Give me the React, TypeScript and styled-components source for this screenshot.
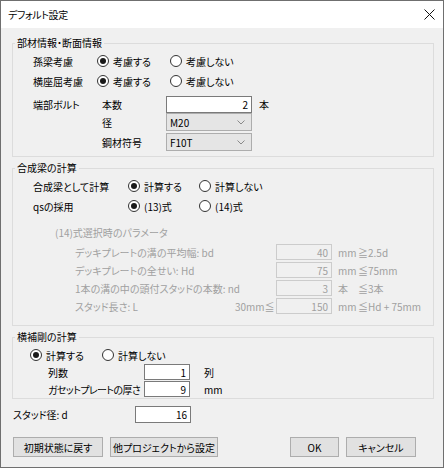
import styled, { createGlobalStyle } from 'styled-components'

const GlobalStyle = createGlobalStyle`
  html, body {
    margin: 0;
    padding: 0;
    background: #ffffff;
  }
  body {
    font-family: 'Noto Sans CJK JP', 'Liberation Sans', sans-serif;
    font-size: 10px;
    color: #000000;
  }
  * {
    box-sizing: border-box;
  }
`

const Window = styled.div`
  width: 444px;
  height: 468px;
  border: 1px solid #6f6f6f;
  display: flex;
  flex-direction: column;
  background: #f0f0f0;
  font-feature-settings: 'palt';
`

const TitleBar = styled.div`
  height: 27px;
  flex: none;
  background: #ffffff;
  display: flex;
  align-items: center;
  justify-content: space-between;
  padding: 0 8px 0 7px;
  font-size: 10px;
  letter-spacing: -0.4px;
`

const Body = styled.div`
  flex: 1;
  padding: 7px 9px 0 11px;
  display: flex;
  flex-direction: column;
`

const Group = styled.fieldset<{ $mt?: number; $pb?: number }>`
  margin: ${({ $mt }) => $mt ?? 0}px 0 0 0;
  min-width: 0;
  border: 1px solid #dcdcdc;
  padding: 0 0 ${({ $pb }) => $pb ?? 0}px 2px;
`

const Legend = styled.legend`
  padding: 0 2px;
  margin-left: 0;
  height: 16px;
  line-height: 16px;
`

const Inner = styled.div<{ $pl?: number }>`
  padding-left: ${({ $pl }) => $pl ?? 18}px;
`

const Row = styled.div<{ $h: number; $mt?: number; $pl?: number }>`
  display: flex;
  align-items: center;
  height: ${({ $h }) => $h}px;
  margin-top: ${({ $mt }) => $mt ?? 0}px;
  padding-left: ${({ $pl }) => $pl ?? 0}px;
  white-space: nowrap;
`

const Cell = styled.div<{ $w: number; $pl?: number; $dim?: boolean; $tight?: boolean }>`
  flex: none;
  width: ${({ $w }) => $w}px;
  padding-left: ${({ $pl }) => $pl ?? 0}px;
  letter-spacing: ${({ $tight }) => ($tight ? '-0.6px' : 'normal')};
  color: ${({ $dim }) => ($dim ? '#a0a0a0' : '#000000')};
`

const Note = styled.span<{ $ml?: number; $w?: number; $dim?: boolean; $right?: boolean }>`
  margin-left: ${({ $ml }) => $ml ?? 0}px;
  width: ${({ $w }) => ($w ? `${$w}px` : 'auto')};
  flex: none;
  text-align: ${({ $right }) => ($right ? 'right' : 'left')};
  padding-right: ${({ $right }) => ($right ? 7 : 0)}px;
  color: ${({ $dim }) => ($dim ? '#a0a0a0' : '#000000')};
`

const RadioLabel = styled.label<{ $w?: number }>`
  display: flex;
  align-items: center;
  gap: 4px;
  flex: none;
  width: ${({ $w }) => ($w ? `${$w}px` : 'auto')};
`

const RadioDot = styled.span<{ $on: boolean }>`
  width: 12px;
  height: 12px;
  border-radius: 50%;
  border: 1px solid #333333;
  background: #ffffff;
  display: flex;
  align-items: center;
  justify-content: center;

  &::after {
    content: '';
    display: ${({ $on }) => ($on ? 'block' : 'none')};
    width: 6px;
    height: 6px;
    border-radius: 50%;
    background: #1a1a1a;
  }
`

const Field = styled.div<{ $w: number; $h?: number; $off?: boolean }>`
  flex: none;
  width: ${({ $w }) => $w}px;
  height: ${({ $h }) => $h ?? 17}px;
  border: 1px solid ${({ $off }) => ($off ? '#cccccc' : '#7a7a7a')};
  background: ${({ $off }) => ($off ? '#f0f0f0' : '#ffffff')};
  color: ${({ $off }) => ($off ? '#a0a0a0' : '#000000')};
  display: flex;
  align-items: center;
  justify-content: flex-end;
  padding-right: 3px;
`

const Combo = styled.div`
  flex: none;
  width: 86px;
  height: 18px;
  border: 1px solid #adadad;
  background: #e5e5e5;
  display: flex;
  align-items: center;
  justify-content: space-between;
  padding: 0 6px 0 3px;
`

const ButtonRow = styled.div`
  display: flex;
  align-items: center;
  margin-top: 14px;
  padding-left: 1px;
`

const Button = styled.button<{ $w: number; $ml?: number }>`
  width: ${({ $w }) => $w}px;
  height: 20px;
  margin-left: ${({ $ml }) => $ml ?? 0}px;
  border: 1px solid #adadad;
  background: #e1e1e1;
  font-family: inherit;
  font-size: 10px;
  font-feature-settings: 'palt';
  color: #000000;
  padding: 0;
  white-space: nowrap;
`

const Radio = ({ on, w, children }: { on: boolean; w?: number; children: string }) => (
  <RadioLabel $w={w}>
    <RadioDot $on={on} />
    {children}
  </RadioLabel>
)

const Chevron = () => (
  <svg width="8" height="5" viewBox="0 0 8 5">
    <path d="M0.5 0.5 L4 4 L7.5 0.5" fill="none" stroke="#8a8a8a" strokeWidth="1" />
  </svg>
)

const CloseIcon = () => (
  <svg width="11" height="11" viewBox="0 0 11 11">
    <path d="M0.5 0.5 L10.5 10.5 M10.5 0.5 L0.5 10.5" stroke="#111111" strokeWidth="1" />
  </svg>
)

const params = [
  { label: 'デッキプレートの溝の平均幅: bd', pre: '', value: '40', unit: 'mm', cond: '≧2.5d' },
  { label: 'デッキプレートの全せい: Hd', pre: '', value: '75', unit: 'mm', cond: '≦75mm' },
  { label: '1本の溝の中の頭付スタッドの本数: nd', pre: '', value: '3', unit: '本', cond: '≦3本' },
  { label: 'スタッド長さ: L', pre: '30mm≦', value: '150', unit: 'mm', cond: '≦Hd + 75mm' },
]

export default function App() {
  return (
    <>
      <GlobalStyle />
      <Window>
        <TitleBar>
          <span>デフォルト設定</span>
          <CloseIcon />
        </TitleBar>
        <Body>
          <Group $pb={5}>
            <Legend>部材情報・断面情報</Legend>
            <Inner>
              <Row $h={20}>
                <Cell $w={64}>孫梁考慮</Cell>
                <Radio on w={73}>考慮する</Radio>
                <Radio on={false}>考慮しない</Radio>
              </Row>
              <Row $h={20}>
                <Cell $w={64}>横座屈考慮</Cell>
                <Radio on w={73}>考慮する</Radio>
                <Radio on={false}>考慮しない</Radio>
              </Row>
              <Row $h={18} $mt={4}>
                <Cell $w={69}>端部ボルト</Cell>
                <Cell $w={64}>本数</Cell>
                <Field $w={86}>2</Field>
                <Note $ml={7}>本</Note>
              </Row>
              <Row $h={18}>
                <Cell $w={69} />
                <Cell $w={64}>径</Cell>
                <Combo>
                  M20
                  <Chevron />
                </Combo>
              </Row>
              <Row $h={18} $mt={2}>
                <Cell $w={69} />
                <Cell $w={64}>鋼材符号</Cell>
                <Combo>
                  F10T
                  <Chevron />
                </Combo>
              </Row>
            </Inner>
          </Group>

          <Group $mt={3} $pb={10}>
            <Legend>合成梁の計算</Legend>
            <Inner>
              <Row $h={20}>
                <Cell $w={95}>合成梁として計算</Cell>
                <Radio on w={71}>計算する</Radio>
                <Radio on={false}>計算しない</Radio>
              </Row>
              <Row $h={20}>
                <Cell $w={95}>qsの採用</Cell>
                <Radio on w={71}>(13)式</Radio>
                <Radio on={false}>(14)式</Radio>
              </Row>
              <Row $h={20} $mt={6} $pl={22}>
                <Cell $w={200} $dim>(14)式選択時のパラメータ</Cell>
              </Row>
              {params.map((p, i) => (
                <Row key={p.label} $h={18} $mt={i === 0 ? 1 : 0} $pl={42}>
                  <Cell $w={160} $dim>{p.label}</Cell>
                  <Note $w={41} $dim $right>
                    {p.pre}
                  </Note>
                  <Field $w={56} $h={16} $off>
                    {p.value}
                  </Field>
                  <Note $ml={6} $w={20} $dim>
                    {p.unit}
                  </Note>
                  <Note $dim>{p.cond}</Note>
                </Row>
              ))}
            </Inner>
          </Group>

          <Group $mt={3} $pb={1}>
            <Legend>横補剛の計算</Legend>
            <Inner $pl={15}>
              <Row $h={18} $mt={1}>
                <Radio on w={72}>計算する</Radio>
                <Radio on={false}>計算しない</Radio>
              </Row>
              <Row $h={16}>
                <Cell $w={114} $pl={18}>列数</Cell>
                <Field $w={46} $h={16}>1</Field>
                <Note $ml={14}>列</Note>
              </Row>
              <Row $h={16} $mt={1}>
                <Cell $w={114} $pl={18} $tight>ガセットプレートの厚さ</Cell>
                <Field $w={46} $h={16}>9</Field>
                <Note $ml={14}>mm</Note>
              </Row>
            </Inner>
          </Group>

          <Row $h={17} $mt={7} $pl={1}>
            <Cell $w={122}>スタッド径: d</Cell>
            <Field $w={56}>16</Field>
          </Row>

          <ButtonRow>
            <Button $w={90}>初期状態に戻す</Button>
            <Button $w={108} $ml={7}>他プロジェクトから設定</Button>
            <Button $w={49} $ml={72}>OK</Button>
            <Button $w={70} $ml={7}>キャンセル</Button>
          </ButtonRow>
        </Body>
      </Window>
    </>
  )
}
